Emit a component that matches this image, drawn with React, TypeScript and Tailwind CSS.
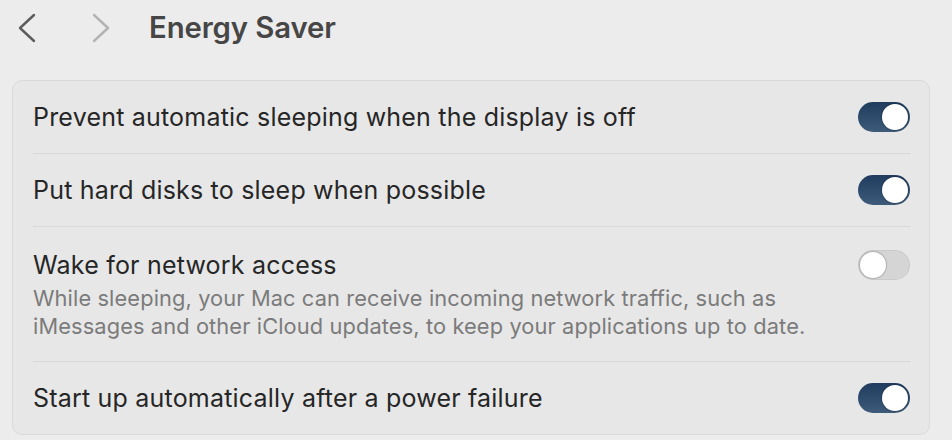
interface Setting {
  title: string;
  description?: string;
  on: boolean;
}

const settings: Setting[] = [
  { title: 'Prevent automatic sleeping when the display is off', on: true },
  { title: 'Put hard disks to sleep when possible', on: true },
  {
    title: 'Wake for network access',
    description:
      'While sleeping, your Mac can receive incoming network traffic, such as iMessages and other iCloud updates, to keep your applications up to date.',
    on: false,
  },
  { title: 'Start up automatically after a power failure', on: true },
];

const Chevron = ({ dir, className }: { dir: 'left' | 'right'; className: string }) => (
  <svg width="20" height="30" viewBox="0 0 20 30" fill="none" className={className}>
    <path
      d={dir === 'left' ? 'M17 2 L3 15 L17 28' : 'M3 2 L17 15 L3 28'}
      stroke="currentColor"
      strokeWidth="2.4"
      strokeLinecap="round"
      strokeLinejoin="round"
    />
  </svg>
);

const Toggle = ({ on }: { on: boolean }) => (
  <div
    className={`flex h-[30px] w-[52px] shrink-0 items-center rounded-full p-[2px] ${
      on
        ? 'justify-end bg-gradient-to-b from-[#1f3c5e] to-[#3e5b7a]'
        : 'justify-start bg-[#d5d5d5] shadow-[inset_0_0_0_1px_rgba(0,0,0,0.05)]'
    }`}
  >
    <div className="h-[26px] w-[26px] rounded-full bg-white shadow-[0_0_1px_1px_rgba(0,0,0,0.18)]" />
  </div>
);

export default function App() {
  return (
    <div
      className="h-[440px] w-[952px] overflow-hidden bg-[#ececec] text-[#262626]"
      style={{ fontFamily: 'Inter, "Noto Sans", sans-serif' }}
    >
      {/* Toolbar */}
      <div className="flex h-[56px] items-center">
        <Chevron dir="left" className="ml-[17px] text-[#5c5c5c]" />
        <Chevron dir="right" className="ml-[54px] text-[#b3b3b3]" />
        <h1 className="ml-[38px] text-[29.3px] font-semibold tracking-[-0.1px] text-[#464646]">
          Energy Saver
        </h1>
      </div>

      {/* Settings group */}
      <div className="ml-[12px] mt-[24px] w-[918px] rounded-[10px] border border-[#dadada] bg-[#e7e7e7] pl-[20px] pr-[19px]">
        {settings.map((s, i) => (
          <div
            key={s.title}
            className={`flex items-start justify-between ${
              i < settings.length - 1 ? 'border-b border-[#d8d8d8]' : ''
            } ${s.description ? 'pb-[21px] pt-[23px]' : 'py-[21px]'}`}
          >
            <div className="flex flex-col">
              <span className="text-[25px] leading-[30px] tracking-[0.2px]">{s.title}</span>
              {s.description && (
                <p className="mt-[4px] w-[800px] text-[21.8px] leading-[28px] tracking-[0.12px] text-[#7b7b7b]">
                  {s.description}
                </p>
              )}
            </div>
            <Toggle on={s.on} />
          </div>
        ))}
      </div>
    </div>
  );
}
